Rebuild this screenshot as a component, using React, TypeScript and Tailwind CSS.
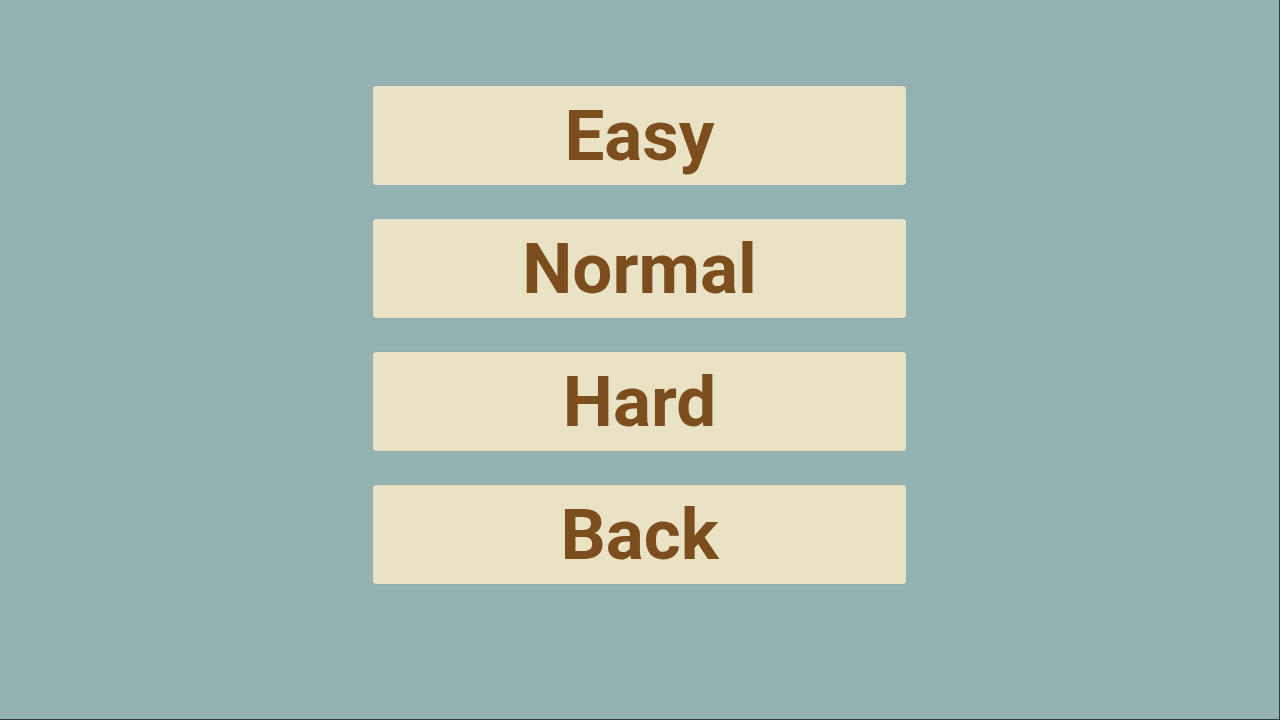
const items = ["Easy", "Normal", "Hard", "Back"];

export default function App() {
  return (
    <div className="w-[1280px] h-[720px] bg-[#93b3b2] border-r border-b border-[#2f3d3d] flex flex-col items-center pt-[86px] gap-[34px]">
      {items.map((label) => (
        <button
          key={label}
          className="w-[533px] h-[99px] shrink-0 rounded-[3px] bg-[#e9e2c5] shadow-[0_0_1px_rgba(0,0,0,0.25)] flex items-center justify-center text-[71px] font-bold leading-none text-[#7c4e1e]"
          style={{ fontFamily: "Roboto, 'Liberation Sans', sans-serif" }}
        >
          {label}
        </button>
      ))}
    </div>
  );
}
